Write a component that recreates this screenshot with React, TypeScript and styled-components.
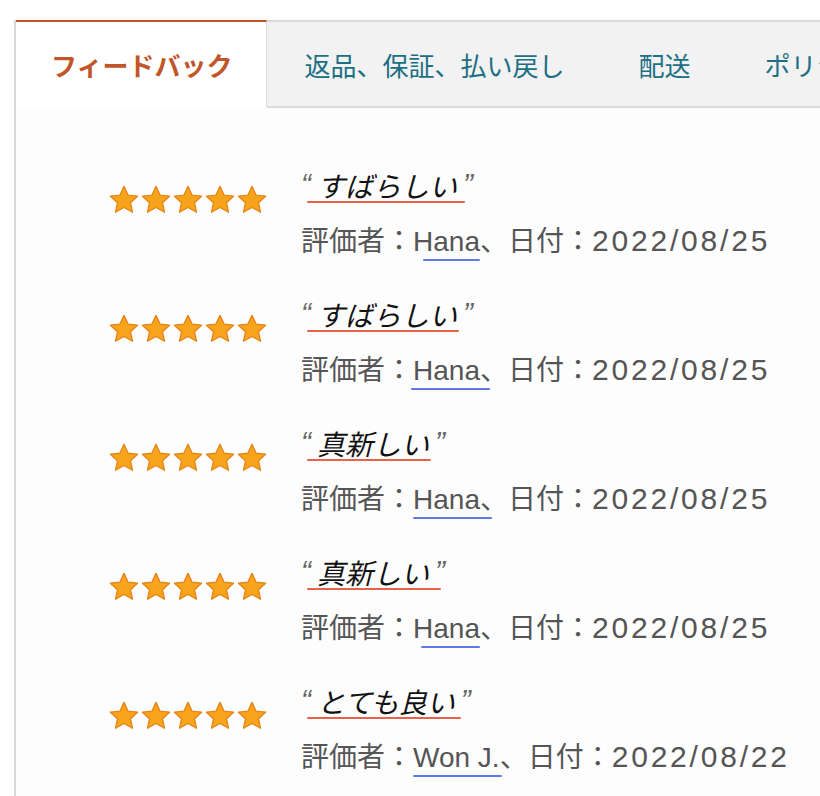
import styled, { createGlobalStyle } from "styled-components";

const GlobalStyle = createGlobalStyle`
  html, body {
    margin: 0;
    padding: 0;
    background: #ffffff;
    font-family: "Liberation Sans", "Noto Sans CJK JP", sans-serif;
  }
`;

const Page = styled.div`
  width: 820px;
  height: 796px;
  overflow: hidden;
  padding: 20px 0 0 14px;
  box-sizing: border-box;
`;

const Panel = styled.div`
  border-left: 2px solid #d8d8d8;
  height: 100%;
  background: #fdfdfd;
`;

const TabBar = styled.div`
  display: flex;
  height: 88px;
  white-space: nowrap;
`;

const Tab = styled.div<{ $active?: boolean }>`
  display: flex;
  align-items: center;
  justify-content: center;
  padding: ${(p) => (p.$active ? "0 34px 0 35px" : "0 37px")};
  box-sizing: border-box;
  font-family: "Noto Sans CJK JP", sans-serif;
  font-size: 26px;
  font-weight: ${(p) => (p.$active ? 700 : 400)};
  color: ${(p) => (p.$active ? "#c0562a" : "#1c6f84")};
  background: ${(p) => (p.$active ? "#ffffff" : "#f2f2f2")};
  border-top: 2px solid ${(p) => (p.$active ? "#c0562a" : "#dadada")};
  border-bottom: 2px solid ${(p) => (p.$active ? "transparent" : "#dadada")};
  border-right: ${(p) => (p.$active ? "1px solid #dadada" : "none")};
  flex-shrink: 0;
`;

const List = styled.div`
  padding-top: 54px;
  display: flex;
  flex-direction: column;
  gap: 30px;
`;

const Row = styled.div`
  display: flex;
  align-items: flex-start;
`;

const Stars = styled.div`
  display: flex;
  margin: 22px 0 0 92px;
  width: 193px;
`;

const Body = styled.div`
  display: flex;
  flex-direction: column;
  gap: 15px;
`;

const Title = styled.div`
  font-family: "Liberation Sans", "Noto Sans CJK JP", sans-serif;
  font-style: italic;
  font-size: 28px;
  height: 44px;
  line-height: 44px;
  color: #111111;
`;

const Quote = styled.span<{ $open?: boolean }>`
  color: #666666;
  font-size: 30px;
  vertical-align: 3px;
  margin: ${(p) => (p.$open ? "0 6px 0 0" : "0 0 0 6px")};
`;

const Meta = styled.div`
  font-family: "Liberation Sans", "Noto Sans CJK JP", sans-serif;
  font-size: 28px;
  height: 40px;
  line-height: 40px;
  color: #555555;
  white-space: nowrap;
`;

const Mark = styled.span<{ $color: string; $l: number; $r: number; $b: number }>`
  position: relative;

  &::after {
    content: "";
    position: absolute;
    left: ${(p) => p.$l}px;
    right: ${(p) => p.$r}px;
    bottom: ${(p) => p.$b}px;
    height: 2px;
    border-radius: 1px;
    background: ${(p) => p.$color};
    opacity: 0.85;
  }
`;

const DateText = styled.span`
  font-size: 30px;
  letter-spacing: 2.8px;
`;

const Star = () => (
  <svg width="32" height="32" viewBox="0 0 24 24">
    <path
      d="M12 1.8l3.1 6.6 7.1.8-5.3 4.9 1.5 7.1L12 17.6l-6.4 3.6 1.5-7.1-5.3-4.9 7.1-.8z"
      fill="#f8a31c"
      stroke="#e4861a"
      strokeWidth="1"
      strokeLinejoin="round"
    />
  </svg>
);

const reviews = [
  { title: "すばらしい", name: "Hana", date: "2022/08/25", nl: 10, nr: 0, tr: -8 },
  { title: "すばらしい", name: "Hana", date: "2022/08/25", nl: -2, nr: -10, tr: -2 },
  { title: "真新しい", name: "Hana", date: "2022/08/25", nl: 0, nr: -12, tr: -2 },
  { title: "真新しい", name: "Hana", date: "2022/08/25", nl: 8, nr: 0, tr: -12 },
  { title: "とても良い", name: "Won J.", date: "2022/08/22", nl: 0, nr: -2, tr: -6 },
];

const App = () => {
  return (
    <>
      <GlobalStyle />
      <Page>
        <Panel>
          <TabBar>
            <Tab $active>フィードバック</Tab>
            <Tab>返品、保証、払い戻し</Tab>
            <Tab>配送</Tab>
            <Tab>ポリシー</Tab>
          </TabBar>
          <List>
            {reviews.map((r, i) => (
              <Row key={i}>
                <Stars>
                  {[0, 1, 2, 3, 4].map((s) => (
                    <Star key={s} />
                  ))}
                </Stars>
                <Body>
                  <Title>
                    <Mark $color="#e2472e" $l={6} $r={r.tr} $b={0}>
                      <Quote $open>“</Quote>
                      {r.title}
                    </Mark>
                    <Quote>”</Quote>
                  </Title>
                  <Meta>
                    評価者：
                    <Mark $color="#3f63de" $l={r.nl} $r={r.nr} $b={-4}>
                      {r.name}
                    </Mark>
                    、日付：<DateText>{r.date}</DateText>
                  </Meta>
                </Body>
              </Row>
            ))}
          </List>
        </Panel>
      </Page>
    </>
  );
};

export default App;
